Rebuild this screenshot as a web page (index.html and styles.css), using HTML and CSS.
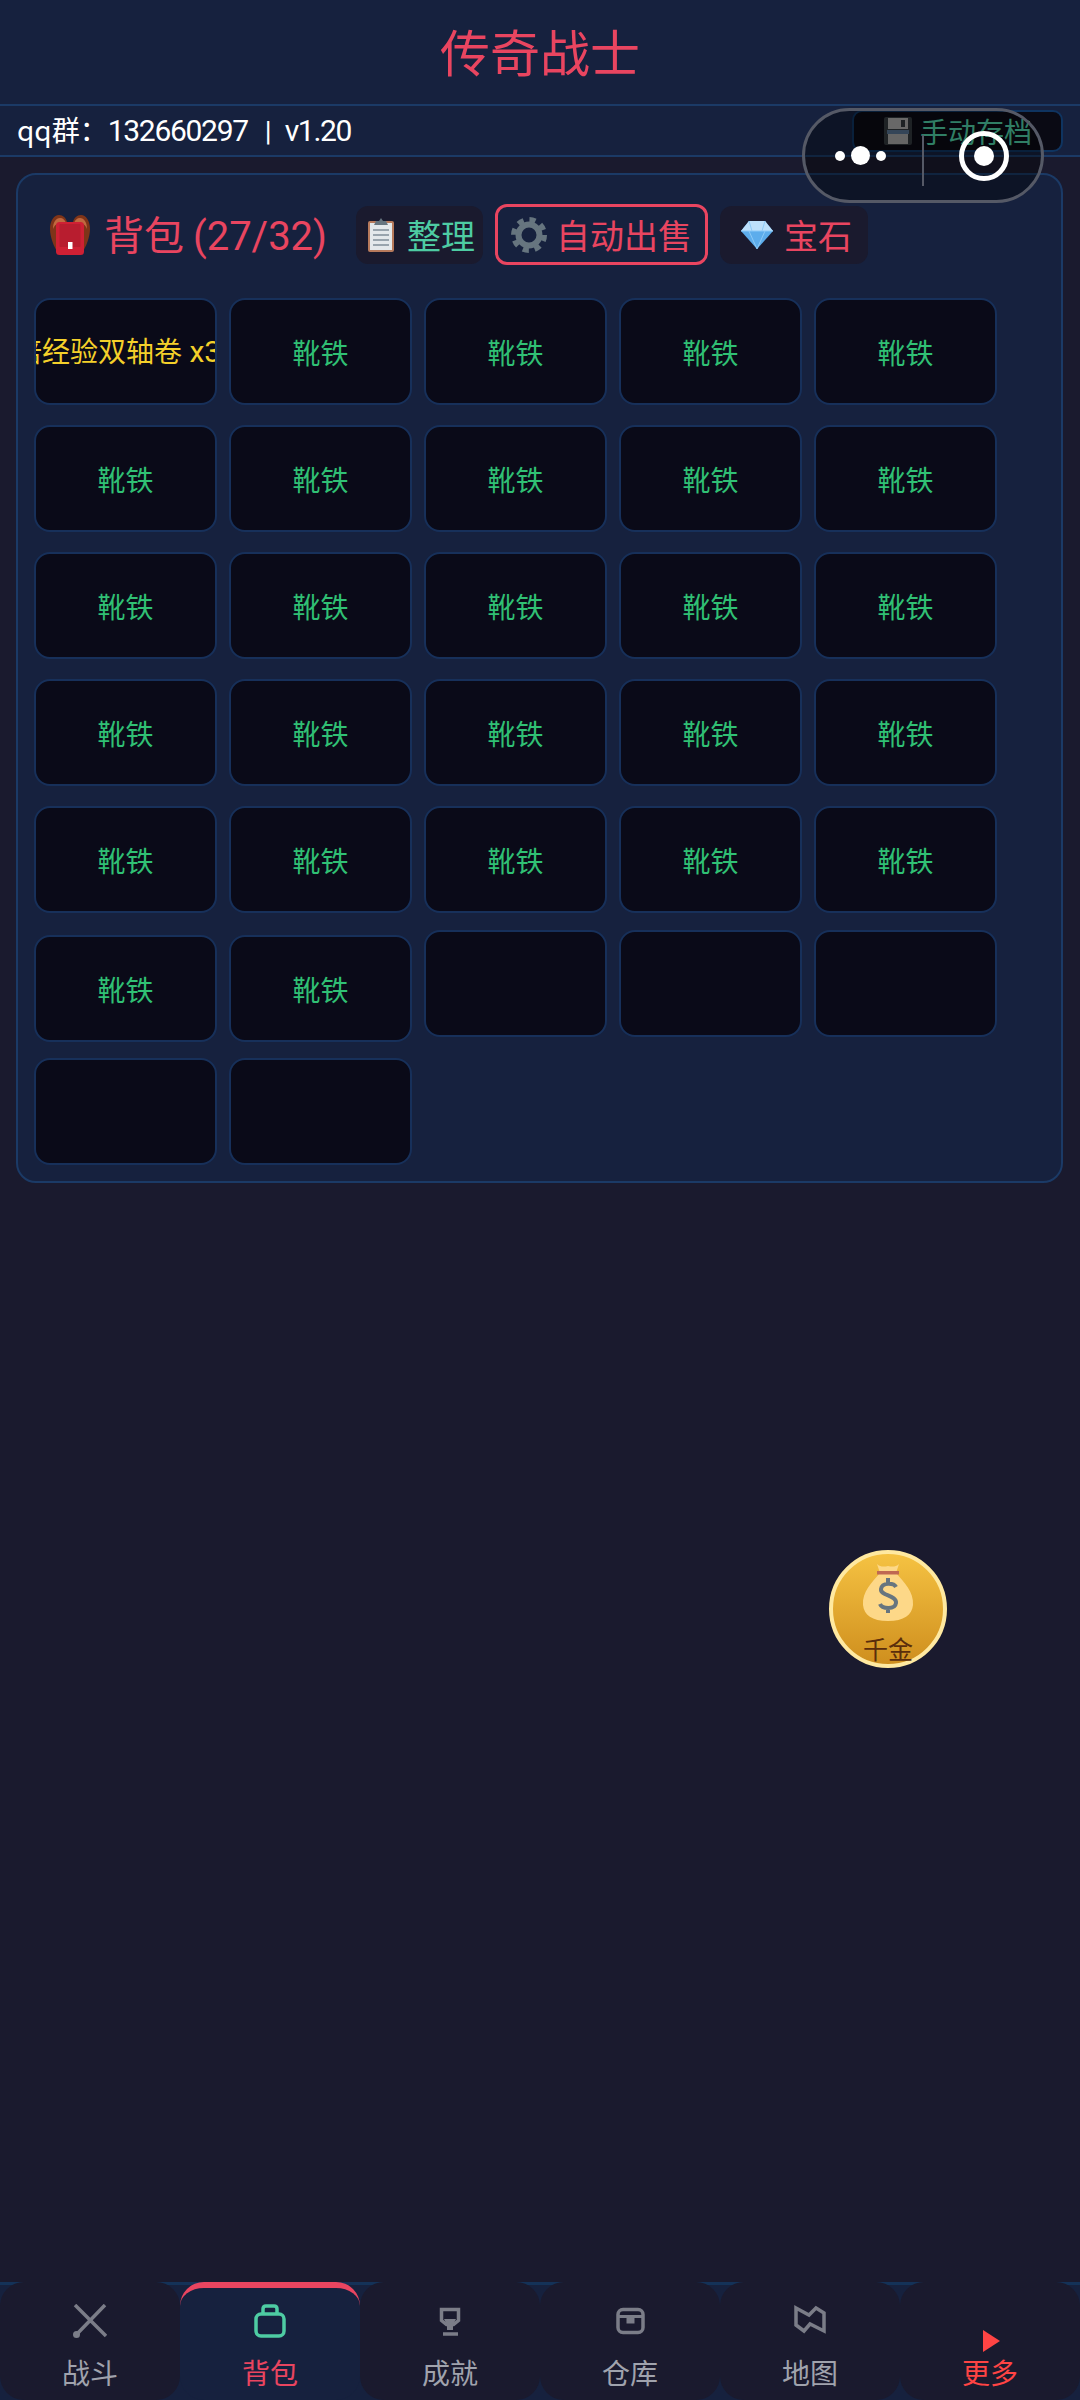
FILE: index.html
```html
<!DOCTYPE html>
<html lang="zh">
<head>
<meta charset="utf-8">
<title>传奇战士</title>
<link rel="stylesheet" href="styles.css">
</head>
<body>
<div class="page">
  <header class="top"><h1 class="title">传奇战士</h1></header>
  <div class="info">
    <span class="qq">qq群：<span class="num">132660297</span><span class="sep">|</span><span class="num">v1.20</span></span>
    <button class="save">
      <svg class="save-ic" viewBox="0 0 28 28"><rect width="28" height="28" rx="2" fill="#31373d"/><rect x="4" y="1" width="20" height="11" fill="#a9a9a9"/><rect x="17" y="3" width="4" height="7" fill="#31373d"/><rect x="3" y="13" width="22" height="4" fill="#55708f"/><rect x="4" y="17" width="20" height="10" fill="#a3a3a3"/></svg>
      <span>手动存档</span>
    </button>
  </div>

  <section class="panel">
    <div class="head">
      <svg class="bag-ic" viewBox="0 0 40 40"><path d="M8 38C4 32 0 22 0 14 0 6 4 0 9 0c4 0 7 3 8 7h6c1-4 4-7 8-7 5 0 9 6 9 14 0 8-4 18-8 24Z" fill="#7f3418"/><path d="M3 14C3 7 6 3 10 3c3 0 5 2 6 5H9c-3 1-5 3-6 6ZM37 14c0-7-3-11-7-11-3 0-5 2-6 5h7c3 1 5 3 6 6Z" fill="#c0693f"/><rect x="6" y="7" width="28" height="33" rx="3.500" fill="#cf2034"/><rect x="9.500" y="9" width="21" height="23" rx="1" fill="#b81d2f"/><rect x="18" y="27" width="4.500" height="7" fill="#fff"/></svg>
      <h2 class="h2">背包 <span class="count">(27/32)</span></h2>
      <button class="btn green sort">
        <svg class="clip-ic" viewBox="0 0 26 34"><rect y="3" width="26" height="31" rx="2" fill="#b77a5c"/><rect x="2" y="5" width="22" height="27" fill="#e3e8eb"/><path d="M5 12h16M5 17h16M5 22h16M5 27h16" stroke="#98a4ad" stroke-width="2"/><path d="M6 7l2-4h3l2-3 2 3h3l2 4Z" fill="#66757f"/></svg>
        <span>整理</span>
      </button>
      <button class="btn red outlined">
        <svg class="gear-ic" viewBox="0 0 36 36"><circle cx="18" cy="18" r="15" fill="none" stroke="#66757f" stroke-width="6" stroke-dasharray="6 5.78"/><circle cx="18" cy="18" r="10.500" fill="none" stroke="#66757f" stroke-width="6"/></svg>
        <span>自动出售</span>
      </button>
      <button class="btn red gems">
        <svg class="gem-ic" viewBox="0 0 34 30"><path d="M9 1h16l8 10L17 29 1 11Z" fill="#5dadec"/><path d="M9 1h16l8 10H1Z" fill="#bde0fb"/><path d="M1 11h32M9 11l8 18 8-18M9 1l3 10M25 1l-3 10" stroke="#8ccaf7" stroke-width="1" fill="none"/></svg>
        <span>宝石</span>
      </button>
    </div>

    <div class="grid">
      <div class="cell gold"><span class="long">倍经验双轴卷<span class="x3"> x3</span></span></div>
      <div class="cell">靴铁</div><div class="cell">靴铁</div><div class="cell">靴铁</div><div class="cell">靴铁</div>
      <div class="cell">靴铁</div><div class="cell">靴铁</div><div class="cell">靴铁</div><div class="cell">靴铁</div><div class="cell">靴铁</div>
      <div class="cell">靴铁</div><div class="cell">靴铁</div><div class="cell">靴铁</div><div class="cell">靴铁</div><div class="cell">靴铁</div>
      <div class="cell">靴铁</div><div class="cell">靴铁</div><div class="cell">靴铁</div><div class="cell">靴铁</div><div class="cell">靴铁</div>
      <div class="cell">靴铁</div><div class="cell">靴铁</div><div class="cell">靴铁</div><div class="cell">靴铁</div><div class="cell">靴铁</div>
      <div class="cell r6">靴铁</div><div class="cell r6">靴铁</div><div class="cell r6e"></div><div class="cell r6e"></div><div class="cell r6e"></div>
      <div class="cell r7"></div><div class="cell r7"></div>
    </div>
  </section>

  <nav class="nav">
    <a class="tab">
      <span class="tab-ic"><svg class="ic" viewBox="0 0 34 34"><path d="M2 1l31 31M32 1L3 31" stroke="#7b7d88" stroke-width="3.500" fill="none"/><circle cx="3.500" cy="30.500" r="3.500" fill="#7b7d88"/></svg></span>
      <span class="tab-label">战斗</span>
    </a>
    <a class="tab active">
      <span class="tab-ic"><svg class="ic" viewBox="0 0 34 34"><rect x="3" y="10" width="28" height="22" rx="5" fill="none" stroke="#4ecca3" stroke-width="3.500"/><path d="M10 10V5q0-3 3-3h8q3 0 3 3v5" fill="none" stroke="#4ecca3" stroke-width="3.500"/></svg></span>
      <span class="tab-label">背包</span>
    </a>
    <a class="tab">
      <span class="tab-ic"><svg class="ic" viewBox="0 0 34 34"><path d="M8.500 5.500h17v11l-5 4h-7l-5-4Z" fill="none" stroke="#7b7d88" stroke-width="3.500"/><path d="M11 15h12l-3 6h-6Z" fill="#7b7d88"/><path d="M14 21h6v5h-6Z" fill="#7b7d88"/><path d="M10 30h15" stroke="#7b7d88" stroke-width="3.500"/></svg></span>
      <span class="tab-label">成就</span>
    </a>
    <a class="tab">
      <span class="tab-ic"><svg class="ic" viewBox="0 0 34 34"><rect x="5" y="5.500" width="25" height="23" rx="5" fill="none" stroke="#7b7d88" stroke-width="3.500"/><path d="M5 12.500h25" stroke="#7b7d88" stroke-width="3"/><rect x="13.500" y="13" width="8" height="6.500" fill="#7b7d88"/></svg></span>
      <span class="tab-label">仓库</span>
    </a>
    <a class="tab">
      <span class="tab-ic"><svg class="ic" viewBox="0 0 34 34"><path d="M3 4l13 7 7-7 8 5v18l-14-7-6 7-8-6Z" fill="none" stroke="#7b7d88" stroke-width="3.500"/></svg></span>
      <span class="tab-label">地图</span>
    </a>
    <a class="tab more">
      <span class="tab-ic"><svg class="tri" viewBox="0 0 17 22"><path d="M0 0l17 11L0 22Z" fill="#ff4444"/></svg></span>
      <span class="tab-label">更多</span>
    </a>
  </nav>
</div>

<div class="coin">
  <svg class="coin-ic" viewBox="0 0 52 58"><path d="M15 1c3 3 7 3 11 2 4 1 8 1 11-2l-3 9c8 9 18 19 17 32-1 10-9 16-25 16S2 52 1 42C0 29 10 19 18 10Z" fill="#fdd888"/><rect x="15" y="8" width="22" height="3.500" fill="#bf6952"/><path d="M34 24c-2-4-14-5-15 2-1 7 16 6 15 14-1 7-14 6-16 1M26 15v5M26 45v5" fill="none" stroke="#67757f" stroke-width="4"/></svg>
  <span class="coin-text">千金</span>
</div>

<div class="capsule">
  <span class="dots"><i class="dot"></i><i class="dot big"></i><i class="dot"></i></span>
  <i class="divider"></i>
  <span class="ring"><i class="ring-dot"></i></span>
</div>
</body>
</html>
```
FILE: styles.css
```css
* { box-sizing: border-box; }
html, body { margin: 0; padding: 0; }
body {
  width: 1080px;
  height: 2400px;
  background: #1a1a2e;
  font-family: "Noto Sans CJK SC", "Noto Sans", sans-serif;
  position: relative;
  overflow: hidden;
}
.page { height: 2400px; display: flex; flex-direction: column; }

.top {
  height: 106px;
  background: #16213e;
  border-bottom: 2px solid #1b3a66;
  display: flex;
  justify-content: center;
  align-items: center;
}
.title { margin: 0; font-size: 50px; font-weight: 400; color: #e94560; line-height: 1; padding-bottom: 4px; }

.info {
  height: 51px;
  background: #16213e;
  border-bottom: 2px solid #1b3a66;
  display: flex;
  justify-content: space-between;
  align-items: flex-start;
  padding: 0 17px 0 17px;
}
.qq { color: #fff; font-size: 28px; line-height: 47px; white-space: nowrap; }
.num { font-family: Roboto, sans-serif; font-size: 30px; font-weight: 400; letter-spacing: -1.3px; }
.sep { font-family: Roboto, sans-serif; font-size: 28px; margin: 0 13px 0 17px; }
.save {
  width: 211px;
  height: 42px;
  margin-top: 4px;
  background: #0a0a14;
  border: 2px solid #0f3460;
  border-radius: 10px;
  display: flex;
  align-items: center;
  padding: 0 0 0 30px;
  color: #4ecca3;
  font: 400 28px "Noto Sans CJK SC", sans-serif;
  gap: 8px;
}
.save-ic { width: 28px; height: 28px; }

.panel {
  margin: 16px 17px 0 16px;
  height: 1010px;
  background: #16213e;
  border: 2px solid #1b3a66;
  border-radius: 20px;
  padding: 0 16px;
}
.head {
  height: 61px;
  margin-top: 29px;
  margin-bottom: 33px;
  padding-left: 16px;
  display: flex;
  align-items: center;
}
.bag-ic { width: 40px; height: 40px; margin-right: 14px; }
.h2 { margin: 0 29px 0 0; font-size: 40px; font-weight: 400; color: #e94560; line-height: 61px; white-space: nowrap; }
.count { font-family: Roboto, sans-serif; font-size: 40px; font-weight: 400; }
.btn {
  height: 58px;
  background: #1a1a2e;
  border: none;
  border-radius: 12px;
  display: flex;
  align-items: center;
  margin-right: 12px;
  font: 400 34px "Noto Sans CJK SC", sans-serif;
  white-space: nowrap;
}
.btn.green { color: #4ecca3; }
.btn.red { color: #e94560; }
.btn.sort { padding: 0 8px 0 12px; gap: 13px; }
.btn.outlined { height: 61px; background: transparent; border: 3px solid #e94560; padding: 0 13px 0 13px; gap: 9px; }
.btn.gems { padding: 0 16px 0 20px; gap: 10px; }
.clip-ic { width: 26px; height: 34px; }
.gear-ic { width: 36px; height: 36px; }
.gem-ic { width: 34px; height: 30px; }

.grid {
  display: grid;
  grid-template-columns: repeat(5, 183px);
  grid-auto-rows: 107px;
  column-gap: 12px;
  row-gap: 20px;
}
.cell {
  background: #0a0a18;
  border: 2px solid #17305a;
  border-radius: 16px;
  display: flex;
  align-items: center;
  justify-content: center;
  overflow: hidden;
  color: #30c074;
  font-size: 28px;
  line-height: 1;
  white-space: nowrap;
}
.cell.gold { color: #f4d02a; justify-content: flex-start; }
.long { margin-left: -22px; flex: none; font-size: 28px; }
.x3 { font-family: Roboto, sans-serif; font-size: 30px; white-space: pre; }
.r6 { margin-top: 2px; margin-bottom: -2px; }
.r6e { margin-top: -3px; margin-bottom: 3px; }
.r7 { margin-top: -2px; margin-bottom: 2px; }

.nav {
  margin-top: auto;
  height: 118px;
  display: flex;
  background: linear-gradient(#143258 3px, #16213e 3px);
}
.tab {
  flex: 1;
  background: #1a1a2e;
  border-radius: 24px;
  display: flex;
  flex-direction: column;
  align-items: center;
  padding-top: 22px;
  color: #a0a3ad;
}
.tab.active { background: #16213e; border-top: 6px solid #e94560; padding-top: 16px; color: #e94560; }
.tab.more { color: #ff4444; }
.tab-ic { height: 50px; display: flex; align-items: flex-start; justify-content: center; }
.more .tab-ic { align-items: flex-end; padding-bottom: 2px; padding-left: 3px; }
.ic { width: 34px; height: 34px; }
.tri { width: 17px; height: 22px; }
.tab-label { font-size: 28px; line-height: 36px; }

.coin {
  position: absolute;
  left: 829px;
  top: 1550px;
  width: 118px;
  height: 118px;
  border-radius: 50%;
  border: 4px solid #ffe9a0;
  background: linear-gradient(#f5c242, #cf8f1e);
  display: flex;
  flex-direction: column;
  align-items: center;
}
.coin-ic { width: 52px; height: 58px; margin-top: 9px; flex: none; }
.coin-text { font-size: 25px; line-height: 30px; color: #5a2d0c; margin-top: 12px; flex: none; }

.capsule {
  position: absolute;
  left: 802px;
  top: 108px;
  width: 242px;
  height: 95px;
  border: 3px solid #555966;
  border-radius: 48px;
  background: rgba(0, 0, 0, 0.38);
  display: flex;
  align-items: center;
}
.dots { width: 81px; display: flex; align-items: center; justify-content: flex-end; gap: 6px; flex: none; }
.dot { width: 10px; height: 10px; border-radius: 50%; background: #fff; }
.dot.big { width: 19px; height: 19px; }
.divider { width: 2px; height: 51px; background: #555966; margin-left: 36px; margin-top: 10px; flex: none; }
.ring {
  margin-left: 35px;
  width: 50px;
  height: 50px;
  border: 5px solid #fff;
  border-radius: 50%;
  display: flex;
  align-items: center;
  justify-content: center;
  flex: none;
}
.ring-dot { width: 20px; height: 20px; border-radius: 50%; background: #fff; }
```
